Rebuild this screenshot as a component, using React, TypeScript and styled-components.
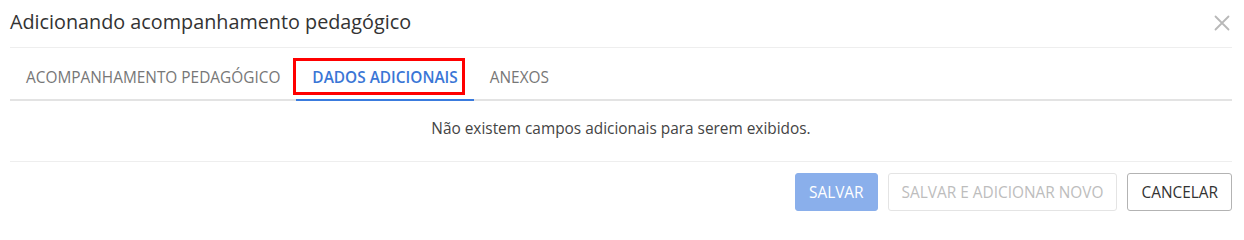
import styled, { createGlobalStyle } from 'styled-components';

const GlobalStyle = createGlobalStyle`
    html, body {
        margin: 0;
        padding: 0;
        background: #ffffff;
        font-family: 'Open Sans', 'Liberation Sans', sans-serif;
    }
    * {
        box-sizing: border-box;
    }
`;

const tabs = ['ACOMPANHAMENTO PEDAGÓGICO', 'DADOS ADICIONAIS', 'ANEXOS'];
const activeTab = 1;

export default function App() {
    return (
        <>
            <GlobalStyle />
            <Modal>
                <Header>
                    <Title>Adicionando acompanhamento pedagógico</Title>
                    <CloseButton aria-label="Fechar">
                        <svg width="16" height="16" viewBox="0 0 16 16">
                            <path
                                d="M1.5 1.5L14.5 14.5M14.5 1.5L1.5 14.5"
                                stroke="#b8b8b8"
                                strokeWidth="1.8"
                                strokeLinecap="round"
                            />
                        </svg>
                    </CloseButton>
                </Header>
                <TabBar>
                    {tabs.map((tab, i) => (
                        <Tab key={tab} active={i === activeTab}>
                            {tab}
                            {i === activeTab && <Highlight />}
                        </Tab>
                    ))}
                </TabBar>
                <Body>Não existem campos adicionais para serem exibidos.</Body>
                <Footer>
                    <Button variant="primary">SALVAR</Button>
                    <Button variant="disabled">SALVAR E ADICIONAR NOVO</Button>
                    <Button variant="default">CANCELAR</Button>
                </Footer>
            </Modal>
        </>
    );
}

const Modal = styled.div`
    width: 1244px;
    height: 216px;
    padding: 0 12px 0 10px;
    display: flex;
    flex-direction: column;
    background: #ffffff;
`;

const Header = styled.div`
    height: 48px;
    display: flex;
    align-items: center;
    justify-content: space-between;
    border-bottom: 1px solid #eeeeee;
    padding-bottom: 4px;
`;

const Title = styled.div`
    font-size: 19.8px;
    color: #333333;
`;

const CloseButton = styled.div`
    display: flex;
    align-items: center;
    margin-right: 2px;
    margin-top: 3px;
`;

const TabBar = styled.div`
    display: flex;
    height: 53px;
    border-bottom: 2px solid #e3e3e3;
`;

const Tab = styled.div<{ active: boolean }>`
    position: relative;
    padding: 19px 16px 0;
    font-size: 15.4px;
    color: ${(p) => (p.active ? '#3a76d6' : '#777777')};
    font-weight: ${(p) => (p.active ? 600 : 400)};
    margin-bottom: -2px;
    border-bottom: 2px solid ${(p) => (p.active ? '#3a7bde' : 'transparent')};
`;

const Highlight = styled.div`
    position: absolute;
    left: -3px;
    top: 10px;
    width: 172px;
    height: 37px;
    border: 3px solid #ff0000;
`;

const Body = styled.div`
    height: 61px;
    display: flex;
    justify-content: center;
    align-items: center;
    padding-bottom: 6px;
    font-size: 15.4px;
    color: #444444;
    border-bottom: 1px solid #eeeeee;
`;

const Footer = styled.div`
    display: flex;
    justify-content: flex-end;
    gap: 10px;
    padding-top: 11px;
`;

const Button = styled.div<{ variant: 'primary' | 'disabled' | 'default' }>`
    height: 38px;
    padding: 0 13px;
    display: flex;
    align-items: center;
    border-radius: 3px;
    font-size: 15.4px;
    background: ${(p) => (p.variant === 'primary' ? '#8aafeb' : '#ffffff')};
    color: ${(p) =>
        p.variant === 'primary'
            ? '#ffffff'
            : p.variant === 'disabled'
              ? '#bdbdbd'
              : '#333333'};
    border: 1px solid
        ${(p) =>
            p.variant === 'primary'
                ? '#8aafeb'
                : p.variant === 'disabled'
                  ? '#e4e4e4'
                  : '#b3b3b3'};
`;
